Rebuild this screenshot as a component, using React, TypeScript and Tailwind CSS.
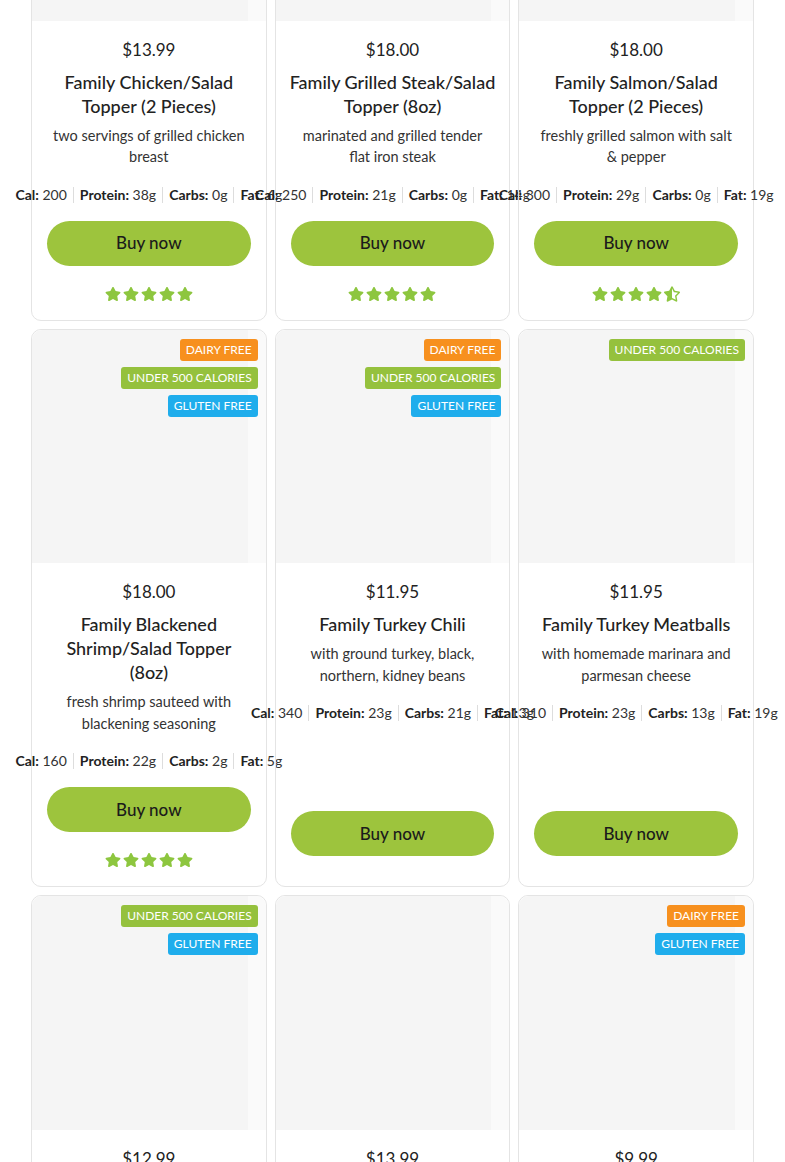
import React from "react";
import { FaStar, FaStarHalfAlt } from "react-icons/fa";

type Badge = "dairy" | "u500" | "gluten";

type Item = {
  price: string;
  title: string;
  desc: string;
  cal: string;
  protein: string;
  carbs: string;
  fat: string;
  badges: Badge[];
  rating: number | null;
};

const items: Item[] = [
  {
    price: "$13.99",
    title: "Family Chicken/Salad Topper (2 Pieces)",
    desc: "two servings of grilled chicken breast",
    cal: "200",
    protein: "38g",
    carbs: "0g",
    fat: "6g",
    badges: [],
    rating: 5,
  },
  {
    price: "$18.00",
    title: "Family Grilled Steak/Salad Topper (8oz)",
    desc: "marinated and grilled tender flat iron steak",
    cal: "250",
    protein: "21g",
    carbs: "0g",
    fat: "14g",
    badges: [],
    rating: 5,
  },
  {
    price: "$18.00",
    title: "Family Salmon/Salad Topper (2 Pieces)",
    desc: "freshly grilled salmon with salt & pepper",
    cal: "300",
    protein: "29g",
    carbs: "0g",
    fat: "19g",
    badges: [],
    rating: 4.5,
  },
  {
    price: "$18.00",
    title: "Family Blackened Shrimp/Salad Topper (8oz)",
    desc: "fresh shrimp sauteed with blackening seasoning",
    cal: "160",
    protein: "22g",
    carbs: "2g",
    fat: "5g",
    badges: ["dairy", "u500", "gluten"],
    rating: 5,
  },
  {
    price: "$11.95",
    title: "Family Turkey Chili",
    desc: "with ground turkey, black, northern, kidney beans",
    cal: "340",
    protein: "23g",
    carbs: "21g",
    fat: "13g",
    badges: ["dairy", "u500", "gluten"],
    rating: null,
  },
  {
    price: "$11.95",
    title: "Family Turkey Meatballs",
    desc: "with homemade marinara and parmesan cheese",
    cal: "310",
    protein: "23g",
    carbs: "13g",
    fat: "19g",
    badges: ["u500"],
    rating: null,
  },
  {
    price: "$12.99",
    title: "Family Chicken Fajitas",
    desc: "grilled chicken with peppers and onions",
    cal: "280",
    protein: "30g",
    carbs: "12g",
    fat: "10g",
    badges: ["u500", "gluten"],
    rating: 5,
  },
  {
    price: "$13.99",
    title: "Family Chicken Alfredo",
    desc: "penne pasta with creamy alfredo sauce",
    cal: "520",
    protein: "32g",
    carbs: "48g",
    fat: "20g",
    badges: [],
    rating: 5,
  },
  {
    price: "$9.99",
    title: "Family Roasted Vegetables",
    desc: "seasonal vegetables roasted with olive oil",
    cal: "120",
    protein: "3g",
    carbs: "14g",
    fat: "6g",
    badges: ["dairy", "gluten"],
    rating: 5,
  },
];

function BadgeTag({ kind }: { kind: Badge }) {
  if (kind === "dairy")
    return (
      <span className="rounded-[3px] bg-[#f7901e] px-[6px] text-[12px] leading-[22px] text-white">
        DAIRY FREE
      </span>
    );
  if (kind === "u500")
    return (
      <span className="rounded-[3px] bg-[#95c13d] px-[6px] text-[12px] leading-[22px] text-white">
        UNDER 500 CALORIES
      </span>
    );
  return (
    <span className="rounded-[3px] bg-[#1fadec] px-[6px] text-[12px] leading-[22px] text-white">
      GLUTEN FREE
    </span>
  );
}

function Stars({ rating }: { rating: number }) {
  const full = Math.floor(rating);
  const half = rating - full >= 0.5;
  return (
    <div className="flex h-[24px] items-center justify-center gap-[2px] text-[#8dc63f]">
      {Array.from({ length: full }).map((_, i) => (
        <FaStar key={i} size={16} />
      ))}
      {half && <FaStarHalfAlt size={16} />}
    </div>
  );
}

function Sep() {
  return <span className="mx-[6px] inline-block h-[16px] w-px shrink-0 bg-[#dddddd]" />;
}

function Card({ item }: { item: Item }) {
  return (
    <div className="flex flex-col rounded-[10px] border border-[#e4e4e4]">
      <div className="relative aspect-square overflow-hidden rounded-t-[10px] bg-[#fafafa]">
        <div className="h-full w-[calc(100%-18px)] bg-[#f5f5f5]" />
        {item.badges.length > 0 && (
          <div className="absolute right-[8px] top-[9px] flex flex-col items-end gap-[6px]">
            {item.badges.map((b) => (
              <BadgeTag key={b} kind={b} />
            ))}
          </div>
        )}
      </div>
      <div className="flex flex-1 flex-col px-[15px] pb-[14px] pt-[17px] text-center">
        <div className="text-[17px] leading-[24px] text-[#222]">{item.price}</div>
        <div className="-mx-[1px] mt-[8px] text-[18px] font-medium leading-[24px] text-[#222]">
          {item.title}
        </div>
        <div className="mt-[7px] px-[2px] text-[14.5px] leading-[21.5px] text-[#333]">{item.desc}</div>
        <div className="mt-[17px] flex items-center justify-center whitespace-nowrap text-[14px] leading-[20px] text-[#333]">
          <span className="shrink-0">
            <b className="font-bold text-[#222]">Cal:</b> {item.cal}
          </span>
          <Sep />
          <span className="shrink-0">
            <b className="font-bold text-[#222]">Protein:</b> {item.protein}
          </span>
          <Sep />
          <span className="shrink-0">
            <b className="font-bold text-[#222]">Carbs:</b> {item.carbs}
          </span>
          <Sep />
          <span className="shrink-0">
            <b className="font-bold text-[#222]">Fat:</b> {item.fat}
          </span>
        </div>
        <div className="mt-auto pt-[16px]">
          <button className="h-[45px] w-full rounded-full bg-[#9dc43d] text-[17px] font-medium text-[#1b1b1b]">
            Buy now
          </button>
          <div className="h-[16px]" />
          {item.rating !== null && <Stars rating={item.rating} />}
        </div>
      </div>
    </div>
  );
}

export default function App() {
  return (
    <div
      className="min-h-screen overflow-hidden bg-white"
      style={{ fontFamily: "Lato, 'Open Sans', sans-serif" }}
    >
      <div className="mt-[-214px] grid grid-cols-3 gap-[8px] px-[31px]">
        {items.map((it, i) => (
          <Card key={i} item={it} />
        ))}
      </div>
    </div>
  );
}
